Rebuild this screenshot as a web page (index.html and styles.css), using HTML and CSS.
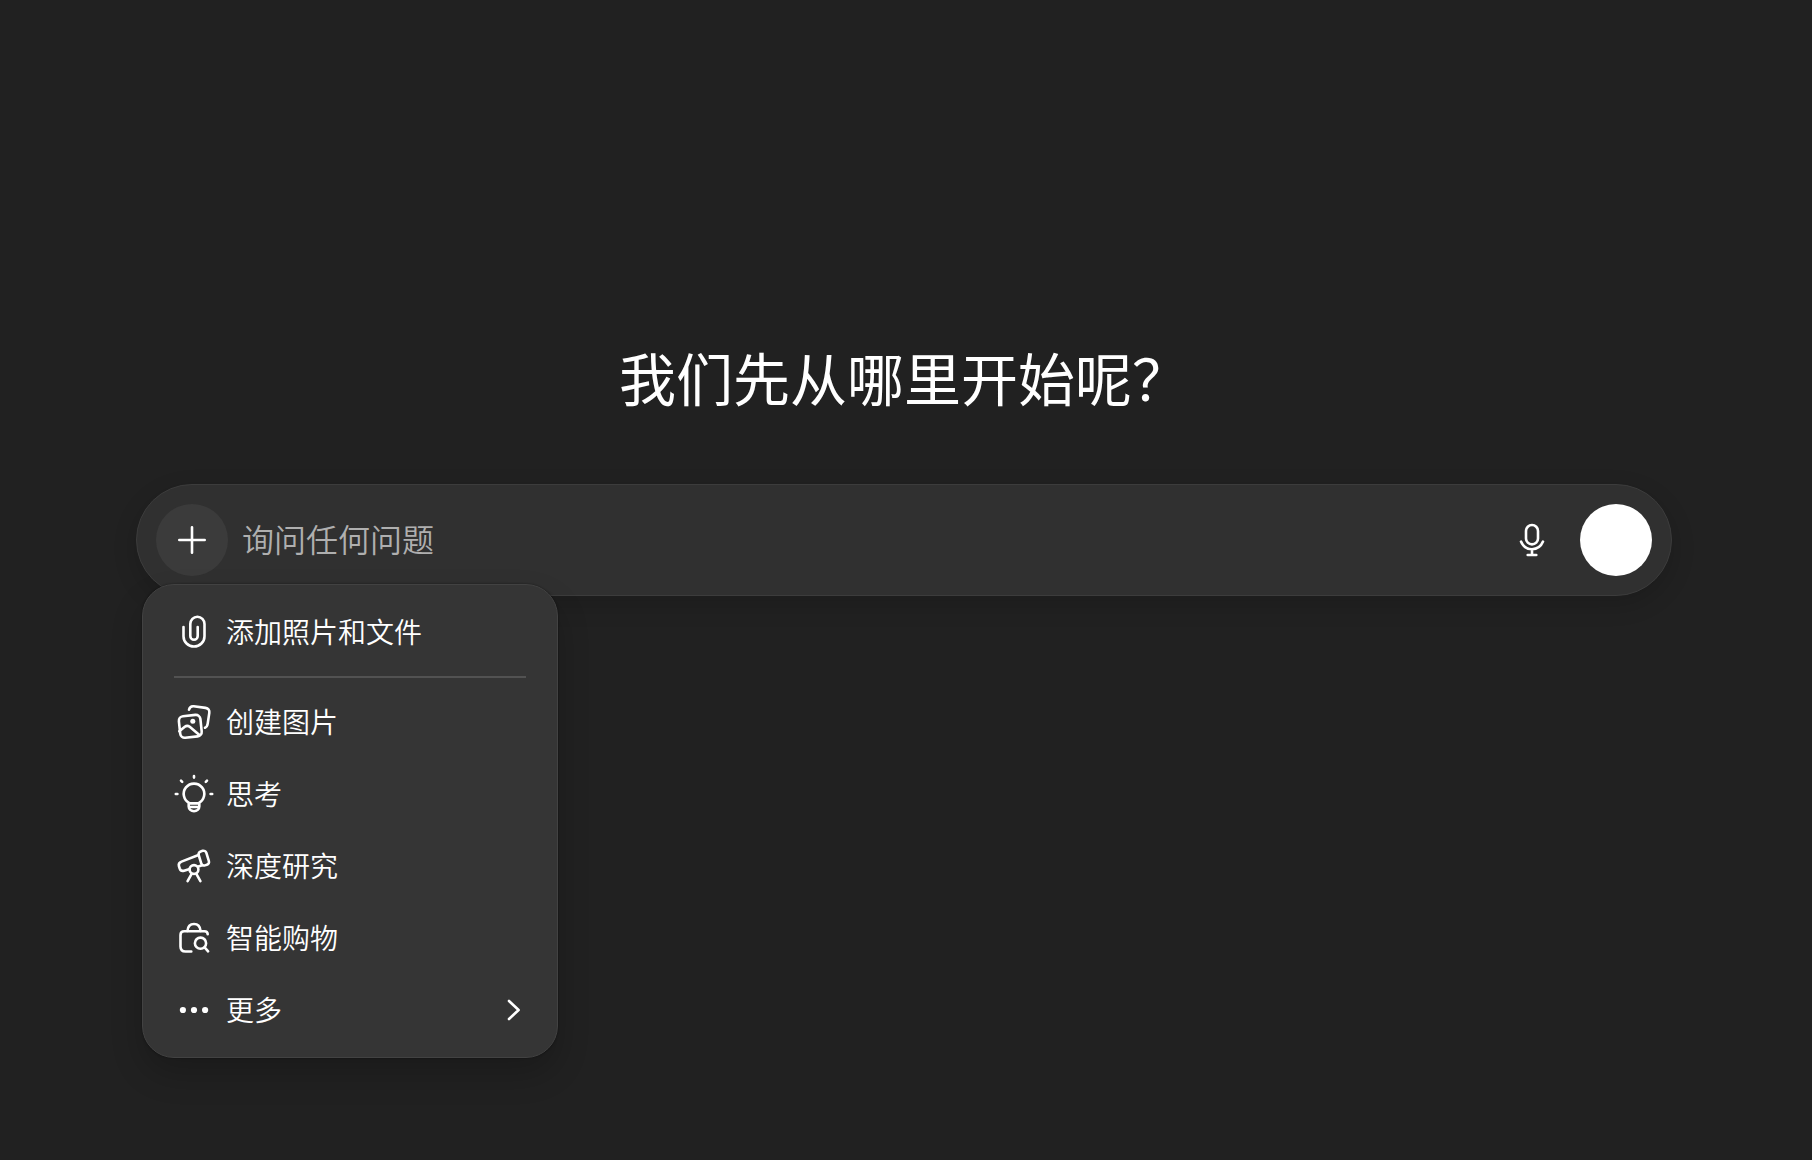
FILE: index.html
```html
<!DOCTYPE html>
<html lang="zh-CN">
<head>
    <meta charset="UTF-8">
    <meta name="viewport" content="width=device-width, initial-scale=1.0">
    <title>我们先从哪里开始呢？</title>
    <link rel="stylesheet" href="styles.css">
</head>
<body>
    <main class="home">
        <h1>我们先从哪里开始呢？</h1>

        <div class="composer-wrap">
            <form class="composer">
                <button type="button" class="round-button add-button" aria-label="添加" aria-expanded="true">
                    <svg class="icon" viewBox="0 0 40 40"><path d="M20 7.3v25.4M7.3 20h25.4"/></svg>
                </button>
                <input type="text" class="prompt" placeholder="询问任何问题" aria-label="询问任何问题">
                <button type="button" class="round-button" aria-label="语音输入">
                    <svg class="icon" viewBox="0 0 40 40">
                        <rect x="14" y="5" width="12" height="19.4" rx="6"/>
                        <path d="M9 21.6C10.8 26 15 29.2 20 29.2S29.2 26 31 21.6M20 29.2V35M15.7 35h8.6"/>
                    </svg>
                </button>
                <button type="submit" class="round-button voice-button" aria-label="使用语音"></button>
            </form>

            <div class="menu" role="menu">
                <button type="button" class="menu-item" role="menuitem">
                    <svg class="icon" viewBox="0 0 40 40"><path d="M9.5 15V24.2a10.5 10.3 0 0 0 21 0V12a7.1 7.3 0 0 0-14.2 0V24a3.7 3.8 0 0 0 7.4 0V15"/></svg>
                    <span>添加照片和文件</span>
                </button>
                <hr>
                <button type="button" class="menu-item" role="menuitem">
                    <svg class="icon" viewBox="0 0 40 40">
                        <path d="M15 7.800C15.600 5.200 17.300 4 19.700 4.300L31.500 5.900c2.800.4 4.200 2.300 3.800 5L33.700 21.600c-.3 2.200-1.200 3.500-2.700 4.100"/>
                        <rect x="5.500" y="13.500" width="21.600" height="21.600" rx="4.600" transform="rotate(-6 16.300 24.300)"/>
                        <path d="M5.300 29.300l5.500-4.500c1.600-1.300 3.200-1.300 4.900 0l9.700 8.300"/>
                        <circle class="solid" cx="18.800" cy="19.200" r="2.500"/>
                    </svg>
                    <span>创建图片</span>
                </button>
                <button type="button" class="menu-item" role="menuitem">
                    <svg class="icon" viewBox="0 0 40 40">
                        <path d="M15.4 29.100A10.300 10.300 0 1 1 24.600 29.100M14.700 29.400h10.600v3.200a5.300 4.600 0 0 1-10.600 0zM15 33h10"/>
                        <path d="M20 2v1.600M1.800 20h1.600M36.600 20h1.600M7 6.600l1.200 1.200M33 6.600l-1.200 1.200"/>
                    </svg>
                    <span>思考</span>
                </button>
                <button type="button" class="menu-item" role="menuitem">
                    <svg class="icon" viewBox="0 0 40 40">
                        <rect x="25.800" y="4.800" width="8" height="14.600" rx="3" transform="rotate(-17 29.800 12.100)"/>
                        <path d="M24.500 9L7.500 15.600C5.200 16.500 4.400 18 4.900 20l.8 2.500c.7 2 2.300 2.800 4.400 2.200l5.600-1.700M24.300 20.400l3.900-1.200"/>
                        <circle cx="20" cy="23.500" r="4.400"/>
                        <path d="M17.800 27.600l-4.200 7.600M22.200 27.600l4.200 7.600"/>
                    </svg>
                    <span>深度研究</span>
                </button>
                <button type="button" class="menu-item" role="menuitem">
                    <svg class="icon" viewBox="0 0 40 40">
                        <path d="M33.700 16.200c0-1.900-1.200-3-3.200-3H10.200c-2.500 0-3.700 1.200-3.700 3.700v11.600c0 3.300 1.700 5 5 5h5.800"/>
                        <path d="M13.400 13C13.800 8.600 16.300 6 20 6s6.200 2.600 6.600 7"/>
                        <circle cx="26.500" cy="25.200" r="5.600"/>
                        <path d="M30.600 29.400l3.500 3.900"/>
                    </svg>
                    <span>智能购物</span>
                </button>
                <button type="button" class="menu-item" role="menuitem" aria-haspopup="menu">
                    <svg class="icon" viewBox="0 0 40 40">
                        <circle class="solid" cx="8.900" cy="20" r="3.100"/>
                        <circle class="solid" cx="20" cy="20" r="3.100"/>
                        <circle class="solid" cx="31.100" cy="20" r="3.100"/>
                    </svg>
                    <span>更多</span>
                    <svg class="chevron" viewBox="0 0 24 24"><path d="M7 3l9.600 9L7 21"/></svg>
                </button>
            </div>
        </div>
    </main>
</body>
</html>
```

FILE: styles.css
```css
* {
    box-sizing: border-box;
}

body {
    margin: 0;
    min-height: 100vh;
    background: #212121;
    color: #fff;
    font-family: "Noto Sans CJK SC", sans-serif;
}

.home {
    max-width: 1540px;
    margin: 0 auto;
    padding: 336px 4px 0 0;
}

h1 {
    margin: 0 0 68px;
    font-size: 57px;
    font-weight: 400;
    line-height: 80px;
    text-align: center;
}

.composer-wrap {
    position: relative;
}

.composer {
    display: flex;
    align-items: center;
    gap: 12px;
    padding: 19px;
    background: #303030;
    border: 1px solid #3c3c3c;
    border-radius: 56px;
    box-shadow: 0 8px 24px rgba(0, 0, 0, 0.16);
}

button {
    padding: 0;
    border: none;
    background: none;
    color: inherit;
    font: inherit;
    cursor: pointer;
}

.round-button {
    display: flex;
    flex: none;
    align-items: center;
    justify-content: center;
    width: 72px;
    height: 72px;
    border-radius: 50%;
}

.add-button {
    background: #3b3b3b;
}

.voice-button {
    background: #fff;
}

.prompt {
    flex: 1;
    min-width: 0;
    padding: 0 2px 4px;
    border: none;
    outline: none;
    background: none;
    color: #fff;
    font-family: inherit;
    font-size: 32px;
    font-weight: 350;
    line-height: 48px;
}

.prompt::placeholder {
    color: #afafaf;
    opacity: 1;
}

.icon,
.chevron {
    flex: none;
    width: 40px;
    height: 40px;
    fill: none;
    stroke: currentColor;
    stroke-width: 2.6;
    stroke-linecap: round;
    stroke-linejoin: round;
}

.solid {
    fill: currentColor;
    stroke: none;
}

.menu {
    position: absolute;
    top: 100px;
    left: 6px;
    width: 416px;
    padding: 11px;
    background: #353535;
    border: 1px solid #424242;
    border-radius: 32px;
    box-shadow: 0 16px 32px rgba(0, 0, 0, 0.2), 0 0 2px rgba(0, 0, 0, 0.5);
}

.menu-item {
    display: flex;
    align-items: center;
    gap: 12px;
    width: 100%;
    height: 72px;
    padding: 0 20px;
    border-radius: 20px;
    font-size: 28px;
    font-weight: 350;
    line-height: 40px;
}

.menu-item span {
    padding-bottom: 2px;
}

.menu-item:hover {
    background: #424242;
}

.menu hr {
    height: 2px;
    margin: 8px 20px;
    border: none;
    background: #525252;
}

.chevron {
    width: 24px;
    height: 24px;
    margin-left: auto;
}
```
